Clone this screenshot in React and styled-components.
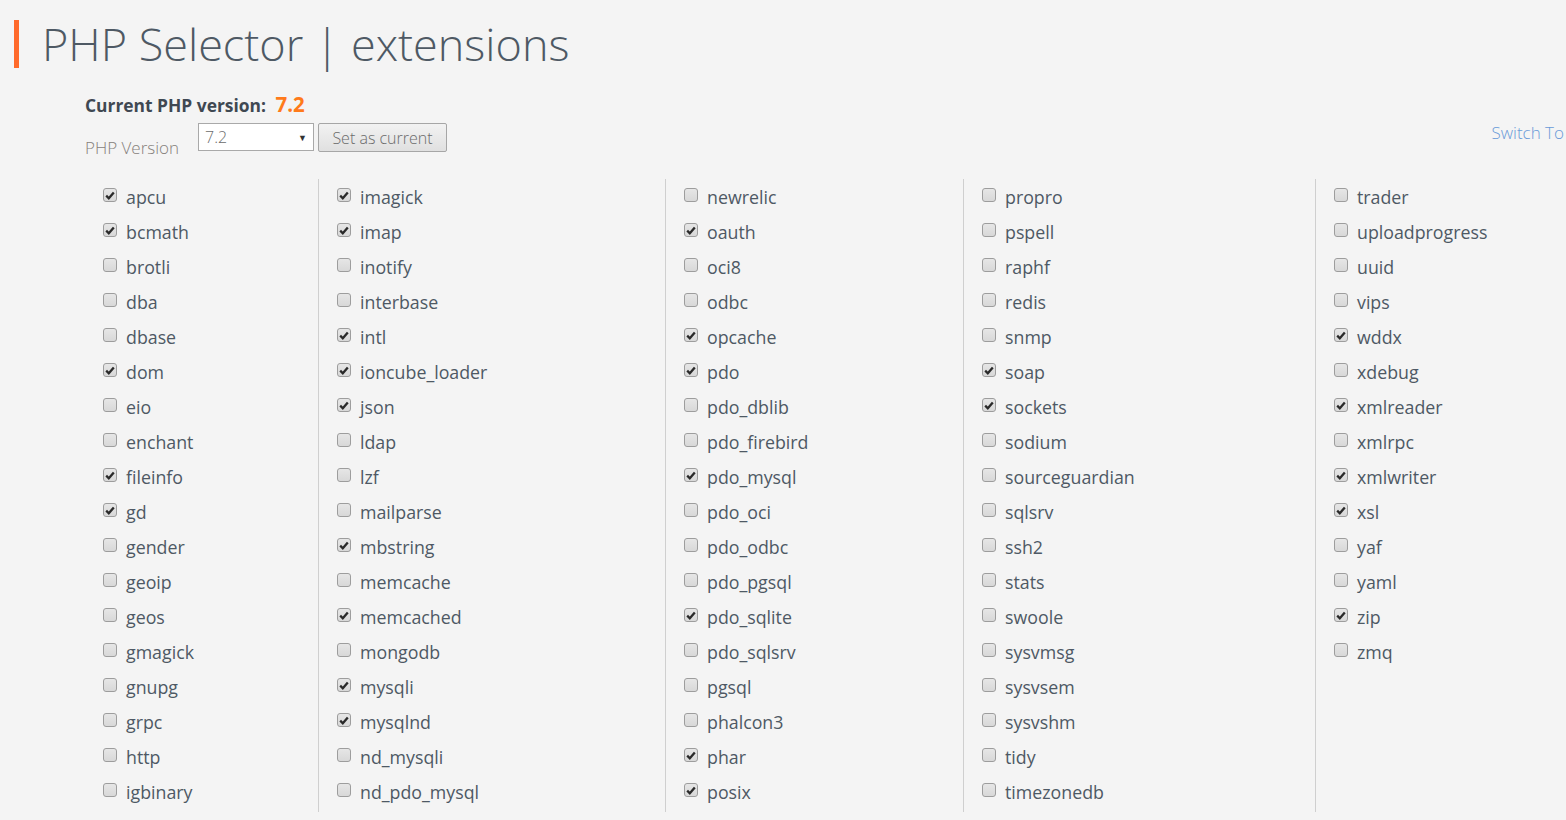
import React from 'react';
import styled, { createGlobalStyle } from 'styled-components';

const GlobalStyle = createGlobalStyle`
  html, body {
    margin: 0;
    padding: 0;
    background: #f4f4f4;
    overflow: hidden;
  }
  body {
    font-family: "Open Sans", "Noto Sans", sans-serif;
    color: #4e5964;
  }
`;

const columns = [
  {
    width: 233,
    items: [
      ['apcu', 1], ['bcmath', 1], ['brotli'], ['dba'], ['dbase'], ['dom', 1],
      ['eio'], ['enchant'], ['fileinfo', 1], ['gd', 1], ['gender'], ['geoip'],
      ['geos'], ['gmagick'], ['gnupg'], ['grpc'], ['http'], ['igbinary'],
    ],
  },
  {
    width: 347,
    items: [
      ['imagick', 1], ['imap', 1], ['inotify'], ['interbase'], ['intl', 1],
      ['ioncube_loader', 1], ['json', 1], ['ldap'], ['lzf'], ['mailparse'],
      ['mbstring', 1], ['memcache'], ['memcached', 1], ['mongodb'], ['mysqli', 1],
      ['mysqlnd', 1], ['nd_mysqli'], ['nd_pdo_mysql'],
    ],
  },
  {
    width: 298,
    items: [
      ['newrelic'], ['oauth', 1], ['oci8'], ['odbc'], ['opcache', 1], ['pdo', 1],
      ['pdo_dblib'], ['pdo_firebird'], ['pdo_mysql', 1], ['pdo_oci'], ['pdo_odbc'],
      ['pdo_pgsql'], ['pdo_sqlite', 1], ['pdo_sqlsrv'], ['pgsql'], ['phalcon3'],
      ['phar', 1], ['posix', 1],
    ],
  },
  {
    width: 352,
    items: [
      ['propro'], ['pspell'], ['raphf'], ['redis'], ['snmp'], ['soap', 1],
      ['sockets', 1], ['sodium'], ['sourceguardian'], ['sqlsrv'], ['ssh2'],
      ['stats'], ['swoole'], ['sysvmsg'], ['sysvsem'], ['sysvshm'], ['tidy'],
      ['timezonedb'],
    ],
  },
  {
    width: 251,
    items: [
      ['trader'], ['uploadprogress'], ['uuid'], ['vips'], ['wddx', 1], ['xdebug'],
      ['xmlreader', 1], ['xmlrpc'], ['xmlwriter', 1], ['xsl', 1], ['yaf'],
      ['yaml'], ['zip', 1], ['zmq'],
    ],
  },
];

const Checkbox = ({ checked }) => (
  <Box>
    {checked && (
      <svg width="10" height="9" viewBox="0 0 10 9">
        <path d="M1.2 4.6 L3.8 7.2 L8.8 1.4" fill="none" stroke="#2a2a2a" strokeWidth="2.3" />
      </svg>
    )}
  </Box>
);

const App = () => {
  return (
    <Page>
      <GlobalStyle />
      <Header>
        <Accent />
        <Title>PHP Selector | extensions</Title>
      </Header>
      <Info>
        <Current>
          Current PHP version: <Version>7.2</Version>
        </Current>
        <Controls>
          <Label>PHP Version</Label>
          <Select>
            <span>7.2</span>
            <Arrow>▼</Arrow>
          </Select>
          <Button>Set as current</Button>
          <SwitchLink>Switch To</SwitchLink>
        </Controls>
      </Info>
      <Extensions>
        {columns.map((col, i) => (
          <Column key={i} $first={i === 0} style={{ width: col.width }}>
            {col.items.map(([name, on]) => (
              <Row key={name}>
                <Checkbox checked={!!on} />
                <Name>{name}</Name>
              </Row>
            ))}
          </Column>
        ))}
      </Extensions>
    </Page>
  );
};

const Page = styled.div`
  width: 1566px;
  height: 820px;
  overflow: hidden;
`;

const Header = styled.div`
  display: flex;
  align-items: center;
  padding: 20px 0 0 14px;
`;

const Accent = styled.div`
  width: 5px;
  height: 48px;
  background: #ff6a2b;
`;

const Title = styled.h1`
  margin: 0 0 0 23px;
  font-size: 45px;
  font-weight: 300;
  line-height: 48px;
  color: #4e5964;
`;

const Info = styled.div`
  padding: 24px 0 0 85px;
`;

const Current = styled.div`
  font-size: 17.4px;
  font-weight: 700;
  color: #3f4852;
  line-height: 24px;
`;

const Version = styled.span`
  margin-left: 5px;
  font-size: 20.5px;
  color: #ff7a1a;
`;

const Controls = styled.div`
  display: flex;
  align-items: flex-start;
  margin-top: 6px;
`;

const Label = styled.div`
  width: 113px;
  padding-top: 13px;
  font-size: 17px;
  font-weight: 300;
  color: #85807b;
`;

const Select = styled.div`
  box-sizing: border-box;
  width: 116px;
  height: 28px;
  display: flex;
  align-items: center;
  justify-content: space-between;
  padding: 0 6px 0 6px;
  background: #fff;
  border: 1px solid #a9a9a9;
  font-size: 16px;
  font-weight: 300;
  color: #6b6b6b;
`;

const Arrow = styled.span`
  font-size: 9px;
  color: #333;
`;

const Button = styled.button`
  box-sizing: border-box;
  margin-left: 4px;
  width: 129px;
  height: 29px;
  padding: 0;
  border: 1px solid #a6a6a6;
  border-radius: 2px;
  background: linear-gradient(#f2f2f2, #e0e0e0);
  font-family: "Open Sans", sans-serif;
  font-size: 16px;
  font-weight: 300;
  color: #6b6b6b;
`;

const SwitchLink = styled.a`
  margin: -2px 2px 0 auto;
  font-size: 17px;
  font-weight: 300;
  color: #6a9bd8;
  white-space: nowrap;
`;

const Extensions = styled.div`
  display: flex;
  margin-top: 20px;
  padding-left: 85px;
`;

const Column = styled.div`
  box-sizing: border-box;
  flex: none;
  height: 633px;
  padding-left: 18px;
  border-left: ${p => (p.$first ? 'none' : '1px solid #cfcfcf')};
`;

const Row = styled.div`
  display: flex;
  align-items: center;
  height: 35px;
`;

const Box = styled.span`
  box-sizing: border-box;
  flex: none;
  width: 14px;
  height: 14px;
  margin-top: -3px;
  display: flex;
  align-items: center;
  justify-content: center;
  border: 1px solid #9d9d9d;
  border-radius: 3px;
  background: linear-gradient(#e6e6e6, #d8d8d8);
`;

const Name = styled.span`
  margin-left: 9px;
  font-size: 17.8px;
  color: #4e5964;
`;

export default App;
